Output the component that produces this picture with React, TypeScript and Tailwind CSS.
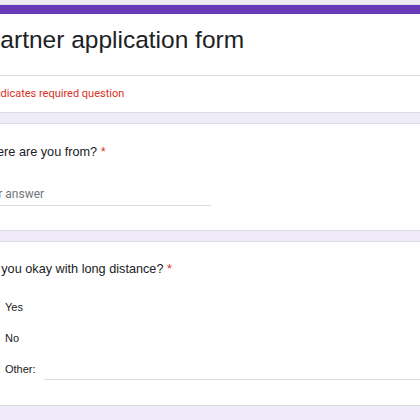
import React from "react";

const sans = { fontFamily: '"Liberation Sans", Arial, sans-serif' };
const roboto = { fontFamily: 'Roboto, "Liberation Sans", sans-serif' };

function Radio({ label, other }: { label: string; other?: boolean }) {
  return (
    <label className="flex h-[31px] items-center gap-[8px]">
      <span className="h-[15px] w-[15px] shrink-0 rounded-full border-2 border-[#5f6368]" />
      <span className="text-[11px] leading-[16px] text-[#202124]" style={sans}>
        {label}
      </span>
      {other && <span className="mt-[22px] flex-1 border-b border-[#dadce0]" />}
    </label>
  );
}

export default function App() {
  return (
    <div className="h-[420px] w-[420px] overflow-hidden bg-[#f0ebf8]">
      <div className="-ml-[37px] flex w-[480px] flex-col gap-[10px] pt-[4px]">
        <section className="overflow-hidden rounded-lg border border-[#dadce0] bg-white">
          <div className="h-[9px] bg-[#673ab7]" />
          <div className="px-[18px] pb-[20px] pt-[11px]">
            <h1 className="ml-[2px] text-[24.5px] font-normal leading-[30px] text-[#202124]" style={sans}>
              Partner application form
            </h1>
          </div>
          <div className="border-t border-[#dadce0] px-[18px] pb-[10px] pt-[10px]">
            <p className="ml-[2px] text-[11px] leading-[16px] text-[#d93025]" style={roboto}>
              * Indicates required question
            </p>
          </div>
        </section>

        <section className="rounded-lg border border-[#dadce0] bg-white px-[18px] pb-[24px] pt-[19px]">
          <p className="-ml-[4px] text-[12.7px] leading-[18px] text-[#202124]" style={sans}>
            Where are you from? <span className="text-[#d93025]">*</span>
          </p>
          <div className="-ml-[4px] mt-[19px] w-[233px] border-b border-[#dadce0] pb-[1px]">
            <span className="text-[12px] leading-[16px] text-[#70757a]" style={roboto}>
              Your answer
            </span>
          </div>
        </section>

        <section className="rounded-lg border border-[#dadce0] bg-white px-[18px] pb-[21px] pt-[18px]">
          <p className="-ml-[4px] text-[12.7px] leading-[18px] text-[#202124]" style={sans}>
            Are you okay with long distance? <span className="text-[#d93025]">*</span>
          </p>
          <div className="mt-[13px] flex flex-col">
            <Radio label="Yes" />
            <Radio label="No" />
            <Radio label="Other:" other />
          </div>
        </section>
      </div>
    </div>
  );
}
